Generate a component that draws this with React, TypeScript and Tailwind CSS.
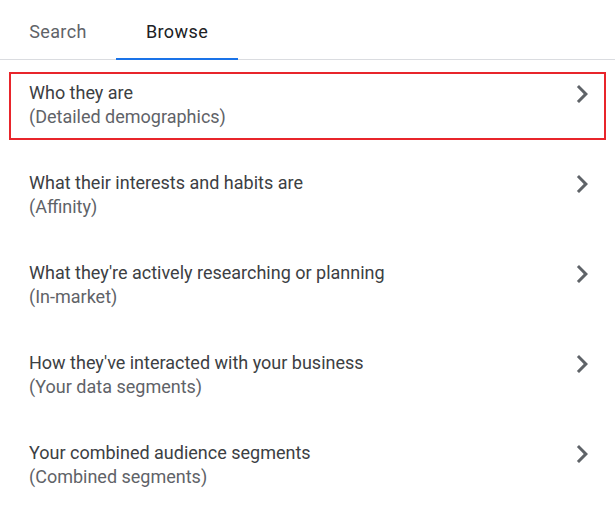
import React from "react";

const rows = [
  { title: "Who they are", sub: "(Detailed demographics)", selected: true },
  { title: "What their interests and habits are", sub: "(Affinity)" },
  { title: "What they're actively researching or planning", sub: "(In-market)" },
  { title: "How they've interacted with your business", sub: "(Your data segments)" },
  { title: "Your combined audience segments", sub: "(Combined segments)" },
];

function Chevron() {
  return (
    <svg width="36" height="36" viewBox="0 0 24 24" className="shrink-0">
      <path d="M10 6L8.59 7.41 13.17 12l-4.58 4.59L10 18l6-6z" fill="#5f6368" />
    </svg>
  );
}

export default function App() {
  return (
    <div
      className="w-[615px] h-[527px] bg-white overflow-hidden"
      style={{ fontFamily: "Roboto, 'Liberation Sans', sans-serif" }}
    >
      <div className="flex h-[60px] border-b border-[#dadce0]">
        <div className="w-[116px] flex items-center justify-center text-[18px] tracking-[0.4px] text-[#5f6368] pt-[3px]">
          Search
        </div>
        <div className="relative w-[122px] flex items-center justify-center text-[18px] tracking-[0.4px] text-[#202124] pt-[3px]">
          Browse
          <div className="absolute left-0 right-0 bottom-[-1px] h-[2px] bg-[#1a73e8]" />
        </div>
      </div>
      <div className="flex flex-col pt-[1px]">
        {rows.map((r) => (
          <div key={r.title} className="px-[9px] py-[11px]">
            <div
              className={
                "h-[68px] border-2 pl-[18px] pr-[4px] pt-[7px] flex items-start justify-between " +
                (r.selected ? "border-[#e8252b]" : "border-transparent")
              }
            >
              <div className="flex flex-col text-[18px] leading-[24px]">
                <span className="text-[#3c4043]">{r.title}</span>
                <span className="text-[#5f6368]">{r.sub}</span>
              </div>
              <div className="mt-[-5px]">
                <Chevron />
              </div>
            </div>
          </div>
        ))}
      </div>
    </div>
  );
}
